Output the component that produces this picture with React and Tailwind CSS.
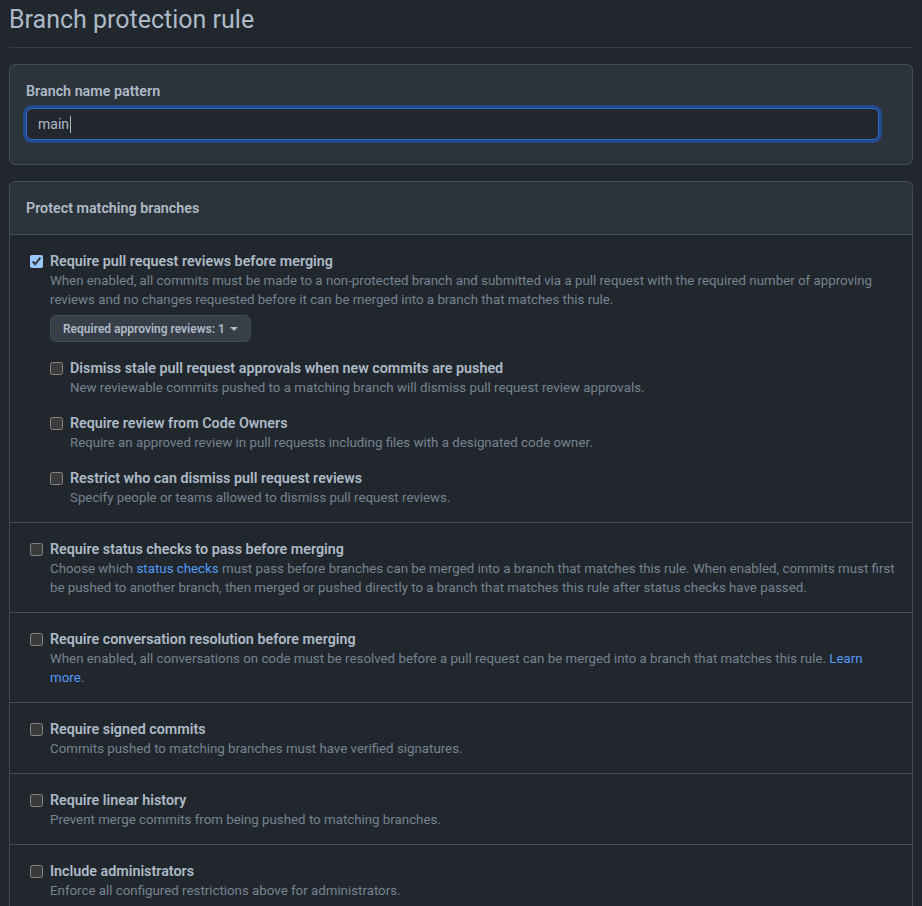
import React from "react";

const font = { fontFamily: 'Roboto, "Noto Sans", sans-serif' };

function Check({ checked }) {
  return (
    <input
      type="checkbox"
      defaultChecked={checked}
      className="scheme-dark m-0 h-[13px] w-[13px] shrink-0"
      readOnly
    />
  );
}

function Item({ title, children, checked }) {
  return (
    <div className="flex">
      <div className="flex h-[20px] w-[20px] items-center">
        <Check checked={checked} />
      </div>
      <div className="min-w-0 flex-1">
        <div className="text-[14.3px] font-semibold leading-[20px] text-[#adbac7]">{title}</div>
        <div className="text-[13.3px] leading-[19px] text-[#768390]">{children}</div>
      </div>
    </div>
  );
}

function Row({ children, last }) {
  return (
    <div className={`pl-[20px] pr-[14px] pt-[16px] pb-[15px] ${last ? "" : "border-b border-[#444c56]"}`}>
      {children}
    </div>
  );
}

export default function App() {
  return (
    <div className="min-h-screen bg-[#22272e] px-[9px]" style={font}>
      <div className="max-w-[904px]">
        <div className="flex h-[48px] items-start border-b border-[#373e47]">
          <h1 className="pt-[3px] text-[25px] font-normal leading-[34px] text-[#adbac7]">
            Branch protection rule
          </h1>
        </div>

        <div className="mt-[16px] rounded-[6px] border border-[#444c56] bg-[#2d333b] px-[16px] pt-[16px] pb-[24px]">
          <div className="text-[14.3px] font-semibold leading-[20px] text-[#adbac7]">Branch name pattern</div>
          <div className="mt-[7px] mr-[17px] flex h-[32px] items-center rounded-[6px] border border-[#316dca] bg-[#22272e] px-[11px] text-[14px] text-[#adbac7] shadow-[0_0_0_3px_#1f4a8c]">
            <span>main</span>
            <span className="ml-[1px] inline-block h-[17px] w-[1px] bg-[#adbac7]" />
          </div>
        </div>

        <div className="mt-[16px] overflow-hidden rounded-t-[6px] border border-b-0 border-[#444c56]">
          <div className="border-b border-[#444c56] bg-[#2d333b] px-[16px] py-[16px]">
            <div className="text-[14.3px] font-semibold leading-[20px] text-[#adbac7]">Protect matching branches</div>
          </div>

          <Row>
            <Item checked title="Require pull request reviews before merging">
              When enabled, all commits must be made to a non-protected branch and submitted via a pull request with the required number of approving reviews and no changes requested before it can be merged into a branch that matches this rule.
            </Item>
            <div className="pl-[20px]">
              <button className="mt-[6px] flex h-[27px] items-center gap-[5px] rounded-[6px] border border-[#444c56] bg-[#373e47] px-[12px] text-[12px] font-semibold text-[#adbac7]">
                Required approving reviews: 1
                <svg width="8" height="4" viewBox="0 0 8 4"><path d="M0 0h8L4 4z" fill="#adbac7" /></svg>
              </button>
              <div className="mt-[16px] flex flex-col gap-[16px]">
                <Item title="Dismiss stale pull request approvals when new commits are pushed">
                  New reviewable commits pushed to a matching branch will dismiss pull request review approvals.
                </Item>
                <Item title="Require review from Code Owners">
                  Require an approved review in pull requests including files with a designated code owner.
                </Item>
                <Item title="Restrict who can dismiss pull request reviews">
                  Specify people or teams allowed to dismiss pull request reviews.
                </Item>
              </div>
            </div>
          </Row>

          <Row>
            <Item title="Require status checks to pass before merging">
              Choose which <span className="text-[#539bf5]">status checks</span> must pass before branches can be merged into a branch that matches this rule. When enabled, commits must first be pushed to another branch, then merged or pushed directly to a branch that matches this rule after status checks have passed.
            </Item>
          </Row>

          <Row>
            <Item title="Require conversation resolution before merging">
              When enabled, all conversations on code must be resolved before a pull request can be merged into a branch that matches this rule. <span className="text-[#539bf5]">Learn more</span>.
            </Item>
          </Row>

          <Row>
            <Item title="Require signed commits">
              Commits pushed to matching branches must have verified signatures.
            </Item>
          </Row>

          <Row>
            <Item title="Require linear history">
              Prevent merge commits from being pushed to matching branches.
            </Item>
          </Row>

          <Row last>
            <Item title="Include administrators">
              Enforce all configured restrictions above for administrators.
            </Item>
          </Row>
        </div>
      </div>
    </div>
  );
}
